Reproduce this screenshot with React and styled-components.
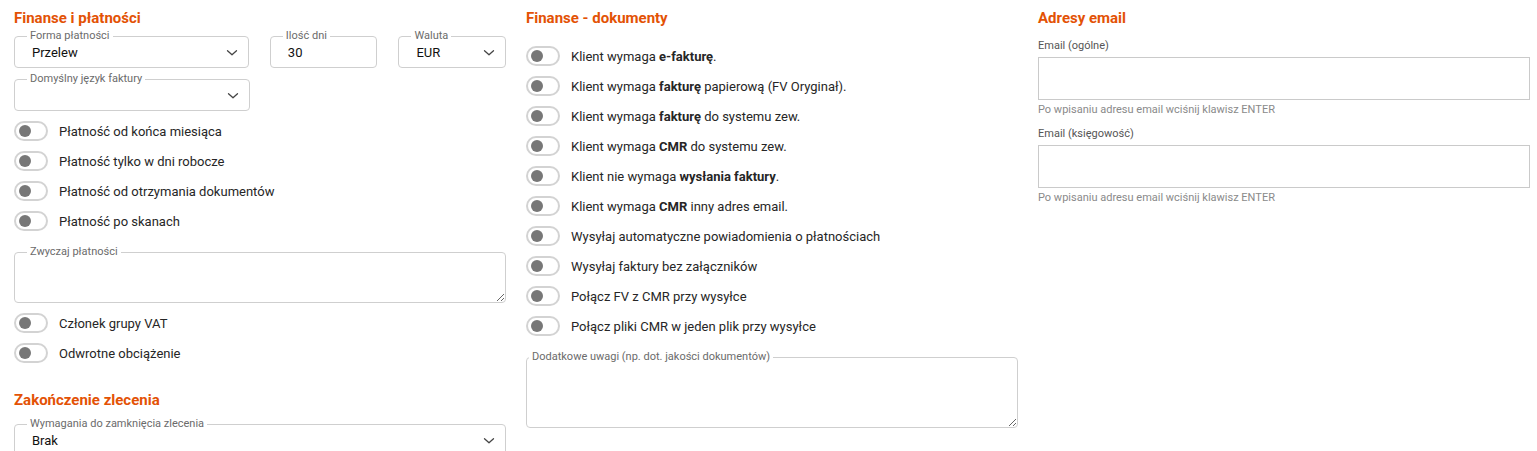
import React from "react";
import styled, { createGlobalStyle } from "styled-components";

const GlobalStyle = createGlobalStyle`
  body {
    margin: 0;
    background: #fff;
    font-family: Roboto, "Liberation Sans", Arial, sans-serif;
    color: #212121;
  }
`;

const Page = styled.div`
  display: grid;
  grid-template-columns: repeat(3, 1fr);
  column-gap: 20px;
  padding: 0 7px 0 14px;
  height: 451px;
  overflow: hidden;
`;

const Column = styled.div`
  display: flex;
  flex-direction: column;
  min-width: 0;
`;

const Heading = styled.h3`
  margin: ${(p) => p.$top || 9}px 0 0;
  font-size: 15px;
  line-height: 18px;
  font-weight: 700;
  color: #e35205;
`;

const FieldRow = styled.div`
  display: flex;
  gap: 21px;
  margin-top: ${(p) => p.$top || 0}px;
`;

const Field = styled.fieldset`
  margin: 0;
  min-width: 0;
  width: ${(p) => p.$width || "100%"};
  box-sizing: border-box;
  padding: 0 10px 4px 17px;
  border: 1px solid #cfcfcf;
  border-radius: 4px;
`;

const Legend = styled.legend`
  font-size: 11px;
  line-height: 12px;
  color: #6b6b6b;
  padding: 0 3px;
  margin-left: ${(p) => (p.$flush ? -15 : -5)}px;
`;

const SelectBox = styled.div`
  display: flex;
  align-items: center;
  justify-content: space-between;
  height: 21px;
  font-size: 13px;
  color: #111;
`;

const TextArea = styled.textarea`
  display: block;
  width: calc(100% + 17px);
  margin: 0 0 0 -17px;
  box-sizing: border-box;
  height: ${(p) => p.$height}px;
  border: none;
  outline: none;
  resize: vertical;
  font-family: inherit;
  font-size: 13px;
  background: transparent;
`;

const AreaField = styled(Field)`
  padding: 0 0 0 17px;
  margin-top: ${(p) => p.$top || 0}px;
`;

const ToggleList = styled.div`
  display: flex;
  flex-direction: column;
  margin-top: ${(p) => p.$top || 0}px;
`;

const ToggleRow = styled.label`
  display: flex;
  align-items: center;
  height: 30px;
  font-size: 13px;
  color: #262626;
`;

const Track = styled.span`
  width: 34px;
  height: 20px;
  box-sizing: border-box;
  border: 2px solid #d3d3d3;
  border-radius: 10px;
  background: #fff;
  display: flex;
  align-items: center;
  padding-left: 3px;
  margin-right: 11px;
  flex: none;
`;

const Knob = styled.span`
  width: 12px;
  height: 12px;
  border-radius: 50%;
  background: #777;
`;

const EmailLabel = styled.div`
  font-size: 11px;
  line-height: 14px;
  color: #555;
  margin-top: ${(p) => p.$top}px;
  margin-bottom: 4px;
`;

const EmailBox = styled.div`
  height: 43px;
  border: 1px solid #cacaca;
  box-sizing: border-box;
`;

const Hint = styled.div`
  font-size: 11px;
  line-height: 14px;
  color: #8a8a8a;
  margin-top: 3px;
`;

const Chevron = () => (
  <svg width="12" height="8" viewBox="0 0 12 8">
    <polyline
      points="1.5,1.8 6,5.8 10.5,1.8"
      fill="none"
      stroke="#444"
      strokeWidth="1.3"
      strokeLinecap="round"
      strokeLinejoin="round"
    />
  </svg>
);

const Select = ({ label, value, width }) => (
  <Field $width={width}>
    <Legend>{label}</Legend>
    <SelectBox>
      <span>{value}</span>
      <Chevron />
    </SelectBox>
  </Field>
);

const Input = ({ label, value, width }) => (
  <Field $width={width}>
    <Legend>{label}</Legend>
    <SelectBox>
      <span>{value}</span>
    </SelectBox>
  </Field>
);

const Toggle = ({ children }) => (
  <ToggleRow>
    <Track>
      <Knob />
    </Track>
    <span>{children}</span>
  </ToggleRow>
);

const docToggles = [
  <>Klient wymaga <b>e-fakturę</b>.</>,
  <>Klient wymaga <b>fakturę</b> papierową (FV Oryginał).</>,
  <>Klient wymaga <b>fakturę</b> do systemu zew.</>,
  <>Klient wymaga <b>CMR</b> do systemu zew.</>,
  <>Klient nie wymaga <b>wysłania faktury</b>.</>,
  <>Klient wymaga <b>CMR</b> inny adres email.</>,
  "Wysyłaj automatyczne powiadomienia o płatnościach",
  "Wysyłaj faktury bez załączników",
  "Połącz FV z CMR przy wysyłce",
  "Połącz pliki CMR w jeden plik przy wysyłce",
];

export default function App() {
  return (
    <>
      <GlobalStyle />
      <Page>
        <Column>
          <Heading>Finanse i płatności</Heading>
          <FieldRow $top={3}>
            <Select label="Forma płatności" value="Przelew" width="236px" />
            <Input label="Ilość dni" value="30" width="108px" />
            <Select label="Waluta" value="EUR" width="108px" />
          </FieldRow>
          <FieldRow $top={5}>
            <Select label="Domyślny język faktury" value="" width="236px" />
          </FieldRow>
          <ToggleList $top={5}>
            <Toggle>Płatność od końca miesiąca</Toggle>
            <Toggle>Płatność tylko w dni robocze</Toggle>
            <Toggle>Płatność od otrzymania dokumentów</Toggle>
            <Toggle>Płatność po skanach</Toggle>
          </ToggleList>
          <AreaField $top={10}>
            <Legend>Zwyczaj płatności</Legend>
            <TextArea $height={44} />
          </AreaField>
          <ToggleList $top={5}>
            <Toggle>Członek grupy VAT</Toggle>
            <Toggle>Odwrotne obciążenie</Toggle>
          </ToggleList>
          <Heading $top={23}>Zakończenie zlecenia</Heading>
          <FieldRow $top={9}>
            <Select label="Wymagania do zamknięcia zlecenia" value="Brak" />
          </FieldRow>
        </Column>

        <Column>
          <Heading>Finanse - dokumenty</Heading>
          <ToggleList $top={14}>
            {docToggles.map((t, i) => (
              <Toggle key={i}>{t}</Toggle>
            ))}
          </ToggleList>
          <AreaField $top={10}>
            <Legend $flush>Dodatkowe uwagi (np. dot. jakości dokumentów)</Legend>
            <TextArea $height={64} />
          </AreaField>
        </Column>

        <Column>
          <Heading>Adresy email</Heading>
          <EmailLabel $top={12}>Email (ogólne)</EmailLabel>
          <EmailBox />
          <Hint>Po wpisaniu adresu email wciśnij klawisz ENTER</Hint>
          <EmailLabel $top={10}>Email (księgowość)</EmailLabel>
          <EmailBox />
          <Hint>Po wpisaniu adresu email wciśnij klawisz ENTER</Hint>
        </Column>
      </Page>
    </>
  );
}
